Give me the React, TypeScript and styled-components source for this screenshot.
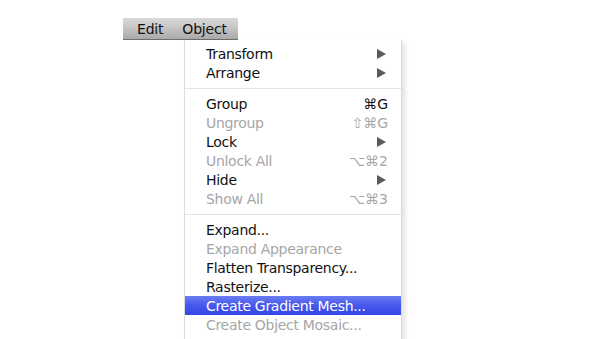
import React from 'react'
import styled, { createGlobalStyle } from 'styled-components'

const GlobalStyle = createGlobalStyle`
    html, body {
        margin: 0;
        padding: 0;
        background: #ffffff;
        overflow: hidden;
    }
    body {
        font-family: "DejaVu Sans", "Liberation Sans", sans-serif;
    }
`

const Page = styled.div`
    width: 599px;
    height: 339px;
    padding: 18px 0 0 123px;
    box-sizing: border-box;
    overflow: hidden;
`

const MenuBar = styled.div`
    display: flex;
    width: 115px;
    height: 22px;
    box-sizing: border-box;
    padding-left: 14px;
    gap: 19px;
    align-items: center;
    background: linear-gradient(to bottom, #dadada 0%, #c4c4c4 50%, #a9a9a9 100%);
    border-bottom: 1px solid #6e6e6e;
`

const MenuTitle = styled.span`
    font-size: 14px;
    color: #111;
    letter-spacing: -0.2px;
`

const Dropdown = styled.div`
    margin-left: 61px;
    width: 216px;
    padding: 4px 0 8px;
    background: #ffffff;
    border: 1px solid #dcdcdc;
    border-top: none;
    box-shadow: 3px 3px 5px rgba(0, 0, 0, 0.12);
`

const Item = styled.div<{ $disabled?: boolean; $active?: boolean }>`
    display: flex;
    align-items: center;
    justify-content: space-between;
    height: 19px;
    padding: 0 13px 0 21px;
    font-size: 14px;
    letter-spacing: -0.3px;
    color: ${p => (p.$active ? '#ffffff' : p.$disabled ? '#a6a6a6' : '#111111')};
    background: ${p => (p.$active ? 'linear-gradient(to bottom, #6a7cf3 0%, #4658ec 50%, #3346e6 100%)' : 'transparent')};
`

const Shortcut = styled.span`
    font-size: 14px;
    letter-spacing: 0;
`

const Arrow = styled.span`
    width: 0;
    height: 0;
    margin-right: 2px;
    border-top: 5px solid transparent;
    border-bottom: 5px solid transparent;
    border-left: 9px solid #5a5a5a;
`

const Separator = styled.div`
    height: 12px;
    display: flex;
    align-items: center;
    &::after {
        content: '';
        flex: 1;
        height: 1px;
        background: #e2e2e2;
    }
`

type Entry = { label: string; disabled?: boolean; active?: boolean; shortcut?: string; sub?: boolean } | 'sep'

const entries: Entry[] = [
    { label: 'Transform', sub: true },
    { label: 'Arrange', sub: true },
    'sep',
    { label: 'Group', shortcut: '⌘G' },
    { label: 'Ungroup', shortcut: '⇧⌘G', disabled: true },
    { label: 'Lock', sub: true },
    { label: 'Unlock All', shortcut: '⌥⌘2', disabled: true },
    { label: 'Hide', sub: true },
    { label: 'Show All', shortcut: '⌥⌘3', disabled: true },
    'sep',
    { label: 'Expand...' },
    { label: 'Expand Appearance', disabled: true },
    { label: 'Flatten Transparency...' },
    { label: 'Rasterize...' },
    { label: 'Create Gradient Mesh...', active: true },
    { label: 'Create Object Mosaic...', disabled: true },
]

function App() {
    return (
        <Page>
            <GlobalStyle />
            <MenuBar>
                <MenuTitle>Edit</MenuTitle>
                <MenuTitle>Object</MenuTitle>
            </MenuBar>
            <Dropdown>
                {entries.map((e, i) =>
                    e === 'sep' ? (
                        <Separator key={i} />
                    ) : (
                        <Item key={i} $disabled={e.disabled} $active={e.active}>
                            <span>{e.label}</span>
                            {e.sub && <Arrow />}
                            {e.shortcut && <Shortcut>{e.shortcut}</Shortcut>}
                        </Item>
                    )
                )}
            </Dropdown>
        </Page>
    )
}

export default App
